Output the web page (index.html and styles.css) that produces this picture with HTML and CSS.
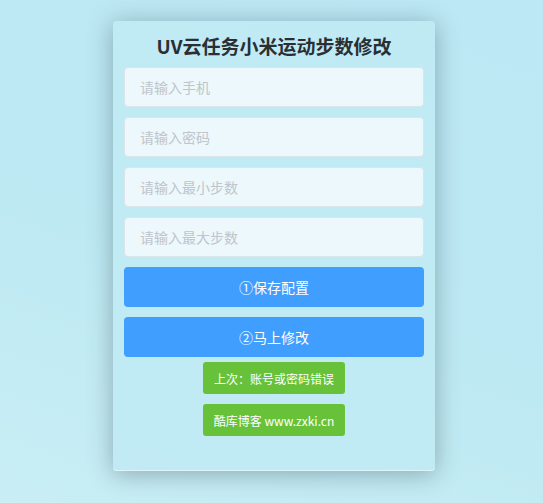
FILE: index.html
```html
<!DOCTYPE html>
<html lang="zh-CN">
<head>
<meta charset="utf-8">
<title>UV云任务小米运动步数修改</title>
<link rel="stylesheet" href="styles.css">
</head>
<body>
<div class="page">
  <div class="card">
    <h1 class="title">UV云任务小米运动步数修改</h1>
    <div class="form">
      <input class="field" type="text" placeholder="请输入手机">
      <input class="field" type="password" placeholder="请输入密码">
      <input class="field" type="text" placeholder="请输入最小步数">
      <input class="field" type="text" placeholder="请输入最大步数">
      <button class="btn btn-primary">①保存配置</button>
      <button class="btn btn-primary">②马上修改</button>
    </div>
    <div class="actions">
      <button class="btn-small first">上次：账号或密码错误</button>
      <button class="btn-small">酷库博客 www.zxki.cn</button>
    </div>
  </div>
</div>
</body>
</html>
```

FILE: styles.css
```css
html, body {
  margin: 0;
  padding: 0;
  height: 100%;
}
body {
  background: linear-gradient(200deg, #bbe8f4 0%, #bde9f3 55%, #c9eef5 100%);
  font-family: "Microsoft YaHei", "Noto Sans CJK SC", "Noto Sans", sans-serif;
}
.page {
  display: flex;
  justify-content: center;
  padding: 21px 0 0 5px;
}
.card {
  box-sizing: border-box;
  width: 322px;
  height: 450px;
  padding: 12px 11px 0;
  background: rgba(192, 234, 244, 0.9);
  border-radius: 4px;
  border-bottom: 1px solid rgba(255, 255, 255, 0.5);
  box-shadow: 0 3px 24px rgba(40, 60, 70, 0.38);
}
.title {
  margin: 0 0 8px;
  font-size: 19px;
  line-height: 26px;
  font-weight: bold;
  text-align: center;
  color: #2a2f33;
}
.form {
  display: flex;
  flex-direction: column;
  gap: 10px;
}
.field {
  box-sizing: border-box;
  width: 100%;
  height: 40px;
  padding: 0 15px;
  border: 1px solid #dbe4e8;
  border-radius: 4px;
  background: #ecf8fb;
  font-family: inherit;
  font-size: 14px;
  color: #606266;
  outline: none;
}
.field::placeholder {
  color: #c0c4cc;
}
.btn {
  box-sizing: border-box;
  height: 40px;
  border: none;
  border-radius: 4px;
  font-family: inherit;
  font-size: 14px;
  color: #fff;
  cursor: pointer;
}
.btn-primary {
  background: #409eff;
}
.actions {
  display: flex;
  flex-direction: column;
  align-items: center;
  gap: 10px;
  margin-top: 5px;
}
.btn-small {
  box-sizing: border-box;
  width: 142px;
  height: 32px;
  padding: 0;
  border: none;
  border-radius: 3px;
  background: #67c23a;
  color: #fff;
  font-family: inherit;
  font-size: 12px;
  cursor: pointer;
}
```
